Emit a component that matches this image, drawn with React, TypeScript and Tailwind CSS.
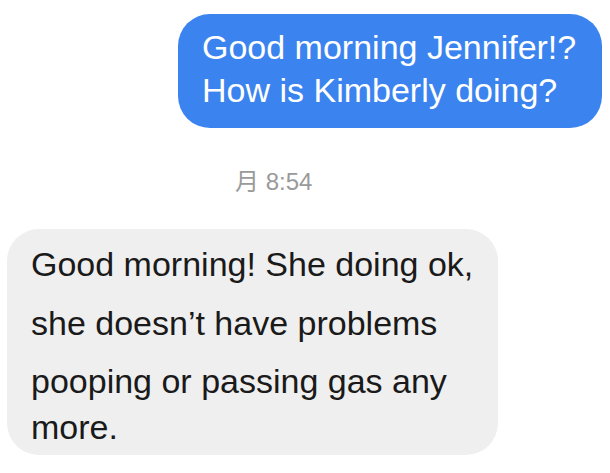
export default function App() {
  const font = { fontFamily: '"Liberation Sans", "Noto Sans CJK JP", sans-serif' };
  return (
    <div className="flex h-[473px] w-[610px] flex-col overflow-hidden bg-white" style={font}>
      <div className="flex justify-end pr-[8px] pt-[14px]">
        <div className="h-[114px] w-[424px] rounded-[32px] bg-[#3b84f0] pl-[24px] pt-[12px] text-[34px] leading-[43px] text-white">
          <div>Good morning Jennifer!?</div>
          <div>How is Kimberly doing?</div>
        </div>
      </div>

      <div className="ml-[235px] mt-[42px] text-[24px] leading-[24px] text-[#9a9a9a]">月 8:54</div>

      <div className="ml-[7px] mt-[35px] h-[226px] w-[491px] rounded-[32px] bg-[#efefef] pl-[24px] pt-[5px] text-[34px] text-[#1a1a1a]">
        <div className="leading-[60px]">Good morning! She doing ok,</div>
        <div className="leading-[58px]">she doesn’t have problems</div>
        <div className="leading-[58px]">pooping or passing gas any</div>
        <div className="leading-[34px]">more.</div>
      </div>
    </div>
  );
}
